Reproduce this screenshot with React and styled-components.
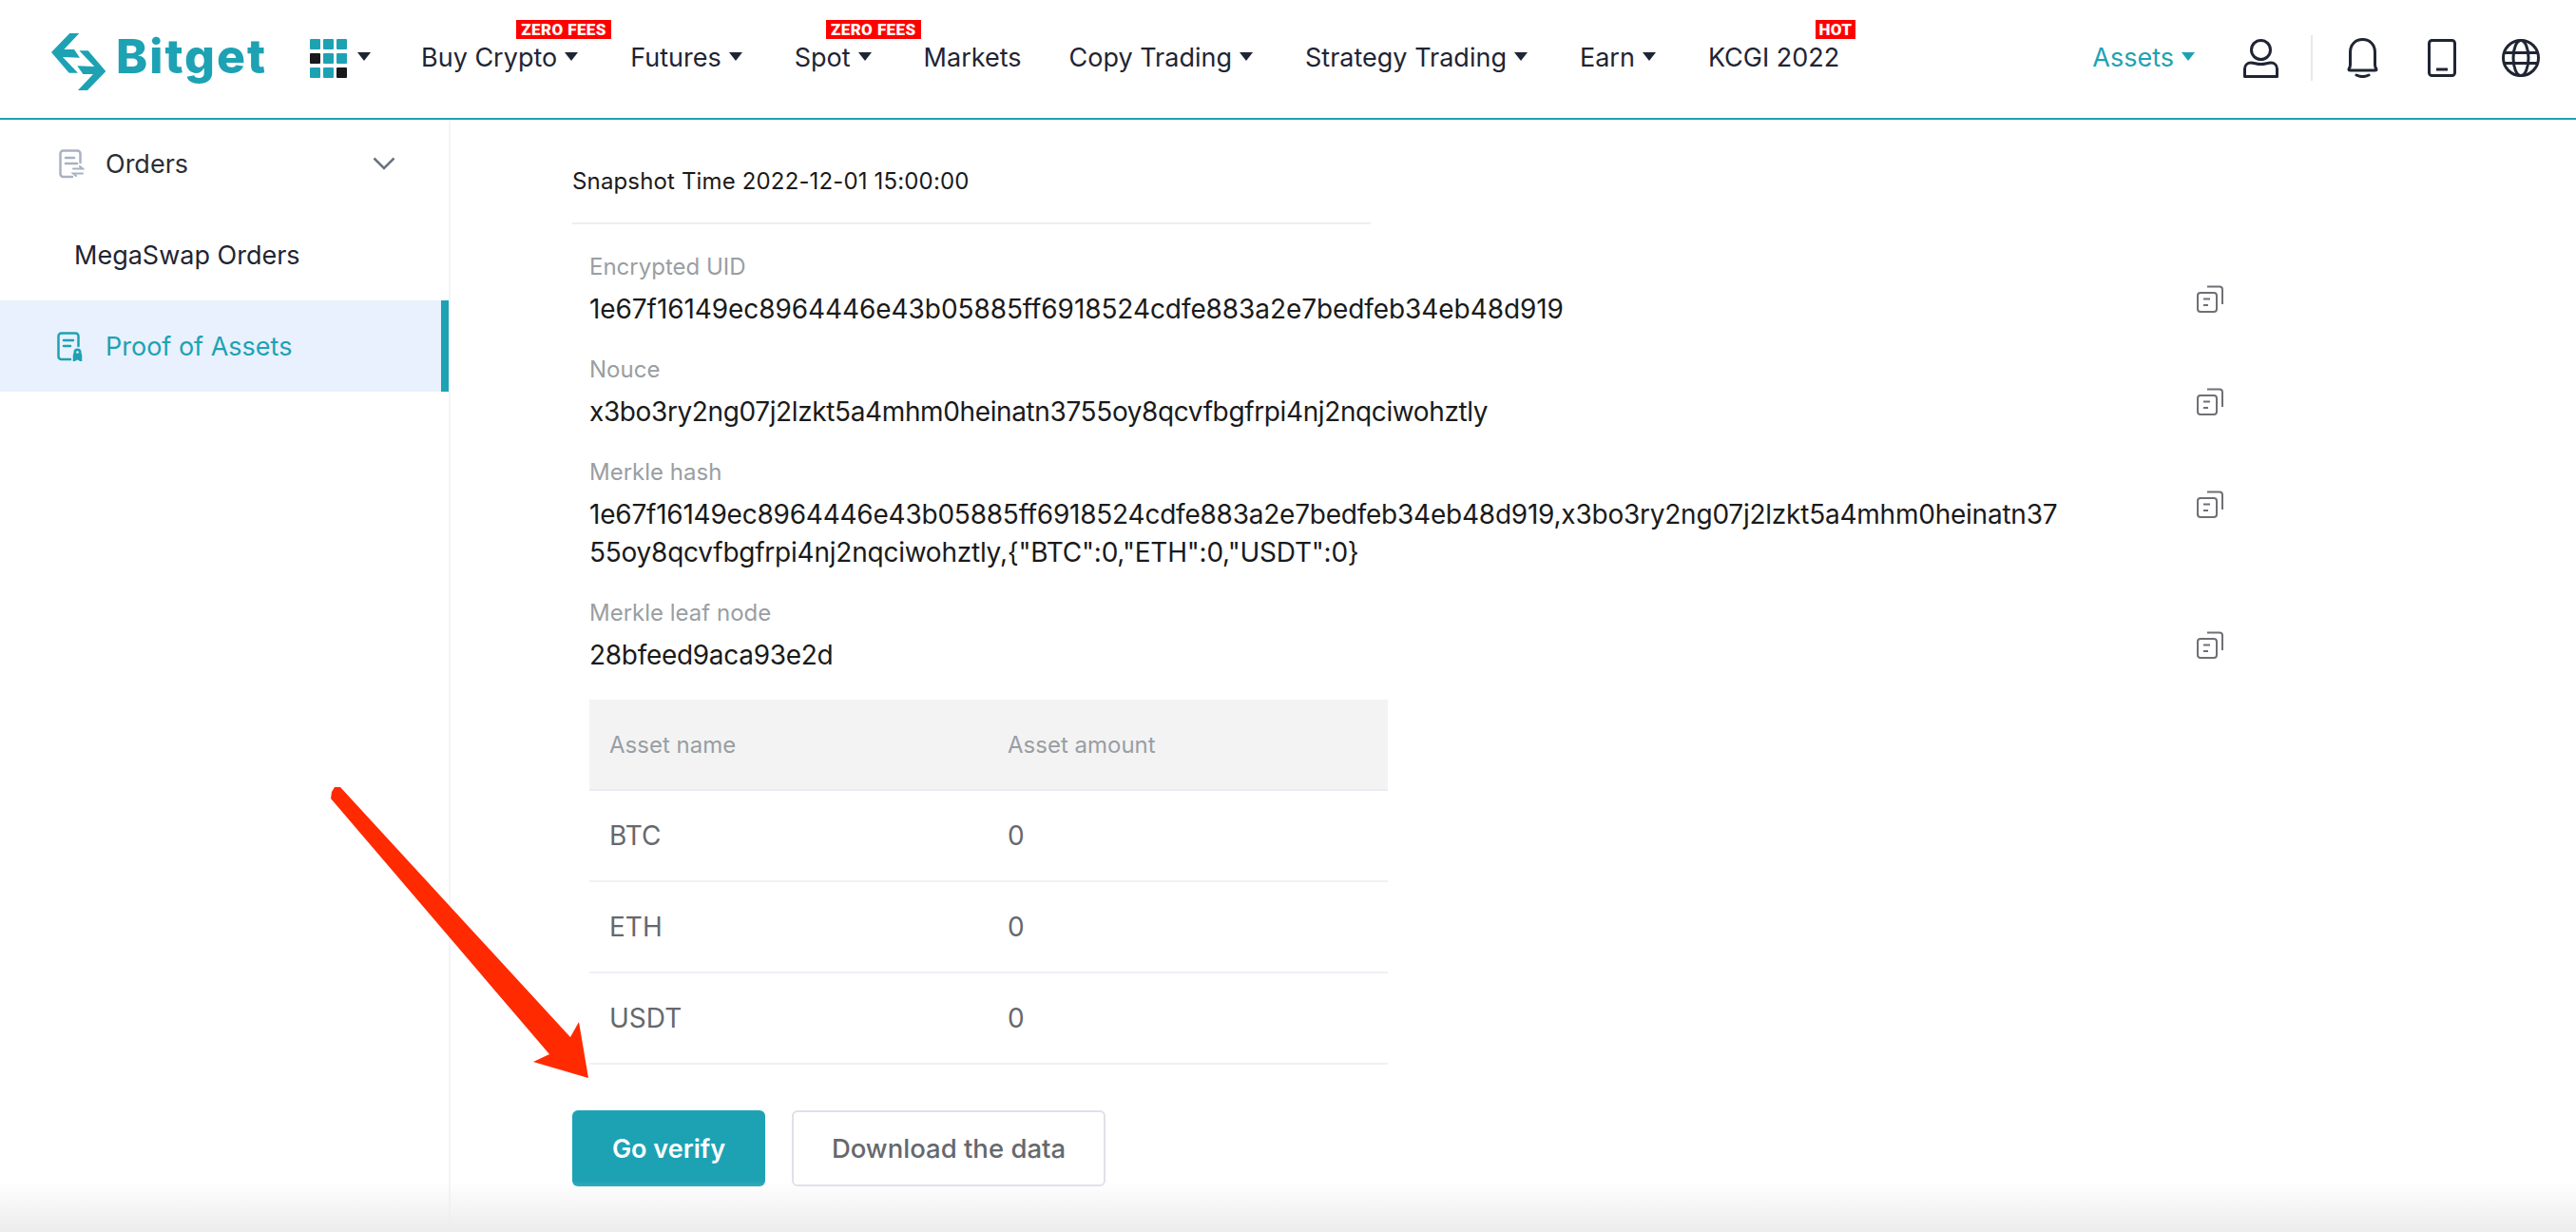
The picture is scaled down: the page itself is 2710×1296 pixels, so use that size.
import React from "react";
import styled, { createGlobalStyle } from "styled-components";

const TEAL = "#1da2b4";
const INK = "#1f2533";

const GlobalStyle = createGlobalStyle`
  html, body {
    margin: 0;
    padding: 0;
    background: #fff;
    font-family: Inter, "Liberation Sans", sans-serif;
  }
  * {
    box-sizing: border-box;
  }
`;

const Page = styled.div`
  position: relative;
  width: 2710px;
  height: 1296px;
  overflow: hidden;
  background: #fff;
`;

const Header = styled.header`
  display: flex;
  align-items: center;
  height: 126px;
  padding: 0 38px 2px 54px;
  border-bottom: 2px solid ${TEAL};
`;

const Logo = styled.div`
  display: flex;
  align-items: flex-start;
  gap: 6px;
  width: 272px;
  height: 60px;
`;

const LogoText = styled.span`
  font-weight: 800;
  font-size: 50px;
  line-height: 56px;
  letter-spacing: 2px;
  color: ${TEAL};
`;

const Waffle = styled.div`
  display: grid;
  grid-template-columns: repeat(3, 11px);
  grid-auto-rows: 11px;
  gap: 4px 3px;
`;

const WaffleCell = styled.span`
  border-radius: 1px;
  background: ${(p) => (p.$dark ? "#17191c" : TEAL)};
`;

const WaffleMenu = styled.div`
  display: flex;
  align-items: center;
  gap: 11px;
  width: 117px;
`;

const Nav = styled.nav`
  display: flex;
  align-items: center;
  gap: 55px;
`;

const NavItem = styled.div`
  position: relative;
  display: flex;
  align-items: center;
  gap: 8px;
  font-size: 27px;
  line-height: 36px;
  white-space: nowrap;
  color: ${(p) => (p.$active ? TEAL : INK)};
  margin-right: ${(p) => (p.$plain ? "-5px" : "0")};
`;

const Caret = styled.span`
  display: block;
  width: 0;
  height: 0;
  margin-top: -4px;
  border-left: 7.5px solid transparent;
  border-right: 7.5px solid transparent;
  border-top: 9px solid ${(p) => (p.$color ? p.$color : INK)};
`;

const Badge = styled.span`
  position: absolute;
  top: -22px;
  left: ${(p) => p.$left}px;
  width: ${(p) => p.$width}px;
  height: 20px;
  background: #ff0000;
  color: #fff;
  font-family: Roboto, Inter, sans-serif;
  font-weight: 900;
  font-size: 17px;
  line-height: 20px;
  text-align: center;
  letter-spacing: 0.4px;
`;

const HeaderRight = styled.div`
  display: flex;
  align-items: center;
  margin-left: auto;
`;

const UserSlot = styled.div`
  display: flex;
  margin-left: 51px;
`;

const Divider = styled.span`
  display: block;
  width: 2px;
  height: 48px;
  margin: 0 36px 0 34px;
  background: #e8e8e8;
`;

const IconRow = styled.div`
  display: flex;
  align-items: center;
  gap: 48px;
`;

const PhoneSlot = styled.div`
  display: flex;
  margin-left: 4px;
`;

const Body = styled.div`
  display: flex;
  height: 1170px;
`;

const Sidebar = styled.aside`
  flex: none;
  width: 474px;
  border-right: 2px solid #f3f4f6;
`;

const SideItem = styled.div`
  display: flex;
  align-items: center;
  height: ${(p) => (p.$top ? "94px" : "96px")};
  padding-left: ${(p) => (p.$plain ? "78px" : "60px")};
  padding-right: 56px;
  padding-bottom: ${(p) => (p.$top ? "2px" : "0")};
  gap: 24px;
  font-size: 27px;
  color: ${(p) => (p.$active ? TEAL : p.$plain ? INK : "#2b2e33")};
  background: ${(p) => (p.$active ? "#e8f1fd" : "transparent")};
  border-right: ${(p) => (p.$active ? `8px solid ${TEAL}` : "none")};
`;

const SideIcon = styled.svg`
  flex: none;
  width: 27px;
  height: 31px;
`;

const Chevron = styled.svg`
  flex: none;
  width: 24px;
  height: 14px;
  margin-left: auto;
`;

const Main = styled.main`
  flex: 1;
  padding: 45px 0 0 128px;
`;

const Snapshot = styled.div`
  width: 840px;
  padding-bottom: 23px;
  border-bottom: 2px solid #eeeeee;
  font-size: 24px;
  line-height: 40px;
  letter-spacing: 0.15px;
  color: #1a1a1a;
`;

const Fields = styled.div`
  padding: 27px 0 0 18px;
`;

const Field = styled.div`
  display: flex;
  align-items: flex-start;
  margin-bottom: 26px;
`;

const FieldBody = styled.div`
  width: 1555px;
`;

const FieldLabel = styled.div`
  font-size: 24px;
  line-height: 36px;
  margin-bottom: 6px;
  color: #999ea3;
`;

const FieldValue = styled.div`
  font-size: 28px;
  line-height: 40px;
  letter-spacing: ${(p) => p.$spacing}px;
  color: #1a1a1a;
  word-break: break-all;
`;

const CopyIcon = styled.svg`
  flex: none;
  width: 29px;
  height: 29px;
  margin: 37px 0 0 136px;
`;

const AssetTable = styled.div`
  width: 840px;
  margin-top: 27px;
`;

const TableRow = styled.div`
  display: grid;
  grid-template-columns: 419px 1fr;
  align-items: center;
  height: 96px;
  padding-left: 21px;
  border-bottom: 2px solid ${(p) => (p.$head ? "#e9edf3" : "#eef0f4")};
  background: ${(p) => (p.$head ? "#f3f3f3" : "#fff")};
  font-size: ${(p) => (p.$head ? "24px" : "28px")};
  color: ${(p) => (p.$head ? "#999ea3" : "#66686d")};
`;

const Actions = styled.div`
  display: flex;
  gap: 28px;
  margin-top: 48px;
`;

const Button = styled.button`
  height: 80px;
  width: ${(p) => p.$width}px;
  border-radius: 6px;
  font-family: inherit;
  font-size: ${(p) => (p.$primary ? "27px" : "27.5px")};
  font-weight: ${(p) => (p.$primary ? 600 : 500)};
  color: ${(p) => (p.$primary ? "#fff" : "#66686d")};
  background: ${(p) => (p.$primary ? TEAL : "#fff")};
  border: ${(p) => (p.$primary ? "none" : "2px solid #dfe1e8")};
`;

const Shade = styled.div`
  position: absolute;
  left: 0;
  right: 0;
  bottom: 0;
  height: 54px;
  background: linear-gradient(to bottom, rgba(236, 236, 236, 0), rgba(236, 236, 236, 1));
  pointer-events: none;
`;

const RedArrow = styled.svg`
  position: absolute;
  left: 340px;
  top: 820px;
  width: 290px;
  height: 320px;
`;

const LogoMark = () => (
  <svg width="66" height="70" viewBox="0 0 198 210" style={{ marginTop: -1, marginLeft: -4 }}>
    <polygon
      fill={TEAL}
      points="70,15 100,15 52,66 84,66 102,92 48,90 96,140 68,140 12,75"
    />
    <polygon
      fill={TEAL}
      points="126,195 96,195 144,144 112,144 94,118 148,120 100,70 128,70 184,135"
    />
  </svg>
);

const UserIcon = () => (
  <svg width="37" height="41" viewBox="0 0 37 41" fill="none" stroke={INK} strokeWidth="3">
    <ellipse cx="18.5" cy="11.5" rx="10" ry="10" />
    <path d="M1.5 39.5v-8c0-4 3-6.5 6.5-6.5 3.500 0 6 1.500 10.500 1.500S25.500 25 29 25c3.500 0 6.500 2.500 6.500 6.500v8z" strokeLinejoin="round" />
  </svg>
);

const BellIcon = () => (
  <svg width="33" height="42" viewBox="0 0 33 42" fill="none" stroke={INK} strokeWidth="3">
    <path d="M2 33c0-.5 1.500-2 1.500-5V15C3.500 7 9 1.500 16.500 1.500S29.500 7 29.500 15v13c0 3 1.500 4.500 1.500 5 0 .5-.5 1-1.500 1h-26C2.500 34 2 33.500 2 33z" strokeLinejoin="round" />
    <path d="M10 39c4 2 9 2 13 0" strokeLinecap="round" />
  </svg>
);

const PhoneIcon = () => (
  <svg width="30" height="40" viewBox="0 0 30 40" fill="none" stroke={INK} strokeWidth="3">
    <rect x="1.500" y="1.500" width="27" height="37" rx="3" />
    <path d="M9 32h12" />
  </svg>
);

const GlobeIcon = () => (
  <svg width="40" height="40" viewBox="0 0 40 40" fill="none" stroke={INK} strokeWidth="3">
    <circle cx="20" cy="20" r="18.500" />
    <ellipse cx="20" cy="20" rx="8" ry="18.500" />
    <path d="M2 14.500h36M2 25.500h36" />
  </svg>
);

const OrdersIcon = () => (
  <SideIcon viewBox="0 0 27 31" fill="none" stroke="#a9b1c2" strokeWidth="2.500" strokeLinecap="round" style={{ marginLeft: 2, marginRight: -2 }}>
    <path d="M14 29H4.500a3 3 0 0 1-3-3V4.500a3 3 0 0 1 3-3h15a3 3 0 0 1 3 3V14" />
    <path d="M7 9h9M7 15h12" />
    <path d="M15 20.500h10l-3-2.500M25 25.500H15l3 2.500" strokeWidth="2" />
  </SideIcon>
);

const ProofIcon = () => (
  <SideIcon viewBox="0 0 27 31" fill="none" stroke={TEAL} strokeWidth="2.500" strokeLinecap="round">
    <path d="M14 29H4.500a3 3 0 0 1-3-3V4.500a3 3 0 0 1 3-3h15a3 3 0 0 1 3 3V15" />
    <path d="M7 9h10M7 15h7" />
    <path d="M18 30v-5a3.500 3.500 0 0 1 7 0v5l-3.500-2z" fill={TEAL} />
    <circle cx="21.500" cy="21.500" r="4" fill={TEAL} stroke="none" />
    <circle cx="21.500" cy="21.500" r="1.300" fill="#e8f1fd" stroke="none" />
  </SideIcon>
);

const Copy = () => (
  <CopyIcon viewBox="0 0 29 29" fill="none" stroke="#6f6f75" strokeWidth="2">
    <rect x="1" y="8" width="20" height="20" rx="3" />
    <path d="M11 1.500h13a3 3 0 0 1 3 3V20" />
    <path d="M7 14.500h7M7 21h5" />
  </CopyIcon>
);

const navItems = [
  { label: "Buy Crypto", caret: true, badge: "ZERO FEES", left: 100, width: 100 },
  { label: "Futures", caret: true },
  { label: "Spot", caret: true, badge: "ZERO FEES", left: 33, width: 100 },
  { label: "Markets" },
  { label: "Copy Trading", caret: true },
  { label: "Strategy Trading", caret: true },
  { label: "Earn", caret: true },
  { label: "KCGI 2022", badge: "HOT", left: 113, width: 42 },
];

const darkCells = [3, 8];

const fields = [
  {
    label: "Encrypted UID",
    value: "1e67f16149ec8964446e43b05885ff6918524cdfe883a2e7bedfeb34eb48d919",
    spacing: -0.08,
  },
  {
    label: "Nouce",
    value: "x3bo3ry2ng07j2lzkt5a4mhm0heinatn3755oy8qcvfbgfrpi4nj2nqciwohztly",
    spacing: -0.38,
  },
  {
    label: "Merkle hash",
    value:
      '1e67f16149ec8964446e43b05885ff6918524cdfe883a2e7bedfeb34eb48d919,x3bo3ry2ng07j2lzkt5a4mhm0heinatn3755oy8qcvfbgfrpi4nj2nqciwohztly,{"BTC":0,"ETH":0,"USDT":0}',
    spacing: -0.23,
  },
  { label: "Merkle leaf node", value: "28bfeed9aca93e2d", spacing: -0.3 },
];

const assets = ["BTC", "ETH", "USDT"];

const App = () => {
  return (
    <Page>
      <GlobalStyle />
      <Header>
        <Logo>
          <LogoMark />
          <LogoText>Bitget</LogoText>
        </Logo>
        <WaffleMenu>
          <Waffle>
            {Array.from({ length: 9 }).map((_, i) => (
              <WaffleCell key={i} $dark={darkCells.includes(i)} />
            ))}
          </Waffle>
          <Caret />
        </WaffleMenu>
        <Nav>
          {navItems.map((item) => (
            <NavItem key={item.label} $plain={!item.caret}>
              {item.label}
              {item.caret && <Caret />}
              {item.badge && (
                <Badge $left={item.left} $width={item.width}>
                  {item.badge}
                </Badge>
              )}
            </NavItem>
          ))}
        </Nav>
        <HeaderRight>
          <NavItem $active>
            Assets
            <Caret $color={TEAL} />
          </NavItem>
          <UserSlot>
            <UserIcon />
          </UserSlot>
          <Divider />
          <IconRow>
            <BellIcon />
            <PhoneSlot>
              <PhoneIcon />
            </PhoneSlot>
            <GlobeIcon />
          </IconRow>
        </HeaderRight>
      </Header>
      <Body>
        <Sidebar>
          <SideItem $top>
            <OrdersIcon />
            Orders
            <Chevron viewBox="0 0 24 14" fill="none" stroke="#6b7280" strokeWidth="2.500">
              <path d="M1.500 1.500L12 12 22.500 1.500" />
            </Chevron>
          </SideItem>
          <SideItem $plain>MegaSwap Orders</SideItem>
          <SideItem $active>
            <ProofIcon />
            Proof of Assets
          </SideItem>
        </Sidebar>
        <Main>
          <Snapshot>Snapshot Time 2022-12-01 15:00:00</Snapshot>
          <Fields>
            {fields.map((field) => (
              <Field key={field.label}>
                <FieldBody>
                  <FieldLabel>{field.label}</FieldLabel>
                  <FieldValue $spacing={field.spacing}>{field.value}</FieldValue>
                </FieldBody>
                <Copy />
              </Field>
            ))}
            <AssetTable>
              <TableRow $head>
                <span>Asset name</span>
                <span>Asset amount</span>
              </TableRow>
              {assets.map((name) => (
                <TableRow key={name}>
                  <span>{name}</span>
                  <span>0</span>
                </TableRow>
              ))}
            </AssetTable>
          </Fields>
          <Actions>
            <Button $primary $width={203}>
              Go verify
            </Button>
            <Button $width={330}>Download the data</Button>
          </Actions>
        </Main>
      </Body>
      <RedArrow viewBox="0 0 290 320">
        <polygon
          fill="#ff2a00"
          points="9,13 12,8 18,8 260,271 269,255 279,314 221,297 238,289 8,20"
        />
      </RedArrow>
      <Shade />
    </Page>
  );
};

export default App;
